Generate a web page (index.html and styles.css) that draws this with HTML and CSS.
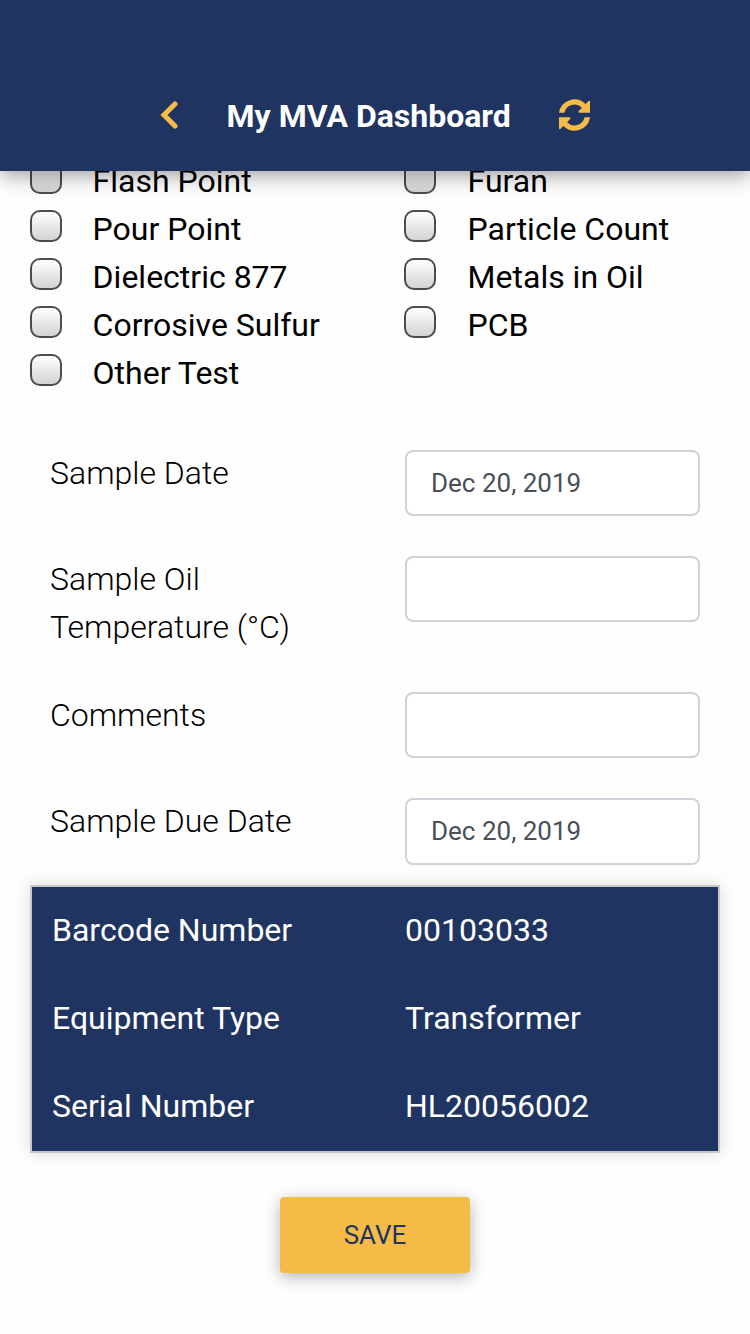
FILE: index.html
```html
<!DOCTYPE html>
<html lang="en">
<head>
<meta charset="utf-8">
<title>My MVA Dashboard</title>
<link rel="stylesheet" href="styles.css">
</head>
<body>
<header class="topbar">
  <svg class="back" viewBox="0 0 18 28"><path d="M15 3 4 14l11 11"/></svg>
  <h1 class="title">My MVA Dashboard</h1>
  <svg class="sync" viewBox="0 0 33 32">
    <path d="M1 13.8A15.7 15.7 0 0 1 27.6 4.9L30.6 2Q32 1.2 32 2.8V13.8H21.4Q19.6 13.2 21 11.8L23.9 8.8A10.3 10.3 0 0 0 6.4 13.8Z"/>
    <path transform="rotate(180 16.5 16)" d="M1 13.8A15.7 15.7 0 0 1 27.6 4.9L30.6 2Q32 1.2 32 2.8V13.8H21.4Q19.6 13.2 21 11.8L23.9 8.8A10.3 10.3 0 0 0 6.4 13.8Z"/>
  </svg>
</header>
<main class="content">
  <div class="tests">
    <label class="test"><input type="checkbox" class="box">Flash Point</label>
    <label class="test"><input type="checkbox" class="box">Furan</label>
    <label class="test"><input type="checkbox" class="box">Pour Point</label>
    <label class="test"><input type="checkbox" class="box">Particle Count</label>
    <label class="test"><input type="checkbox" class="box">Dielectric 877</label>
    <label class="test"><input type="checkbox" class="box">Metals in Oil</label>
    <label class="test"><input type="checkbox" class="box">Corrosive Sulfur</label>
    <label class="test"><input type="checkbox" class="box">PCB</label>
    <label class="test"><input type="checkbox" class="box">Other Test</label>
  </div>
  <form class="fields">
    <div class="field"><label class="name">Sample Date</label><input class="value" value="Dec 20, 2019"></div>
    <div class="field"><label class="name">Sample Oil Temperature (°C)</label><input class="value"></div>
    <div class="field"><label class="name">Comments</label><input class="value"></div>
    <div class="field"><label class="name">Sample Due Date</label><input class="value last" value="Dec 20, 2019"></div>
  </form>
  <dl class="equipment">
    <dt>Barcode Number</dt><dd>00103033</dd>
    <dt>Equipment Type</dt><dd>Transformer</dd>
    <dt>Serial Number</dt><dd>HL20056002</dd>
  </dl>
  <button class="save">SAVE</button>
</main>
</body>
</html>
```
FILE: styles.css
```css
* { box-sizing: border-box; }
body {
  margin: 0;
  height: 1334px;
  display: flex;
  flex-direction: column;
  overflow: hidden;
  background: #fefefe;
  color: #000;
  font: 32px/48px Roboto, sans-serif;
}
.topbar {
  position: relative;
  z-index: 1;
  flex: none;
  height: 171px;
  padding: 59px 0 0 160px;
  display: flex;
  align-items: center;
  background: #203462;
  box-shadow: 0 4px 20px rgba(0, 0, 0, .4);
}
.back { width: 18px; height: 28px; fill: none; stroke: #f5bb47; stroke-width: 5; stroke-linecap: round; }
.title { width: 284px; margin: 2px 0 0 48.6px; color: #fff; font-size: 32px; line-height: 48px; font-weight: 700; white-space: nowrap; }
.sync { width: 33px; height: 32px; margin-left: 47.4px; fill: #f5bb47; }
.content { display: flex; flex-direction: column; height: 1163px; }
.tests {
  display: grid;
  grid-template-columns: 374px 1fr;
  margin-top: -14px;
  padding-left: 30px;
}
.test { display: flex; height: 48px; gap: 30.6px; }
.test:nth-child(even) { gap: 31.6px; }
.box {
  appearance: none;
  flex: none;
  width: 32px;
  height: 32px;
  margin: 5px 0 0;
  border: 2px solid #4c4c4c;
  border-radius: 10px;
  background: linear-gradient(#fff, #d3d3d3);
}
.fields { margin-top: 52px; padding: 0 50px; display: flex; flex-direction: column; gap: 39px; }
.field { display: grid; grid-template-columns: 295px 295px; column-gap: 60px; align-items: start; }
.name { font-weight: 300; }
.value {
  width: 295px;
  height: 66px;
  margin-top: 1px;
  padding: 0 24px;
  border: 2px solid #ced4da;
  border-radius: 8px;
  background: #fff;
  color: #495057;
  font: 26px Roboto, sans-serif;
}
.field:nth-child(2) { padding-bottom: 1px; }
.value.last { height: 67px; padding-bottom: 1px; }
.equipment {
  display: grid;
  grid-template-columns: 353px 1fr;
  row-gap: 40px;
  width: 690px;
  height: 268px;
  margin: 20px 30px 0;
  padding: 19px 20px 21px;
  border: 2px solid #c8c8c8;
  background: #203462;
  box-shadow: 0 0 16px rgba(0, 0, 0, .15);
  color: #fff;
}
.equipment dd { margin: 0; }
.save {
  align-self: center;
  width: 190px;
  height: 76px;
  margin-top: 44px;
  border: 0;
  border-radius: 4px;
  background: #f5bb47;
  box-shadow: 0 4px 16px rgba(0, 0, 0, .3);
  color: #203462;
  font: 26px Roboto, sans-serif;
}
```
